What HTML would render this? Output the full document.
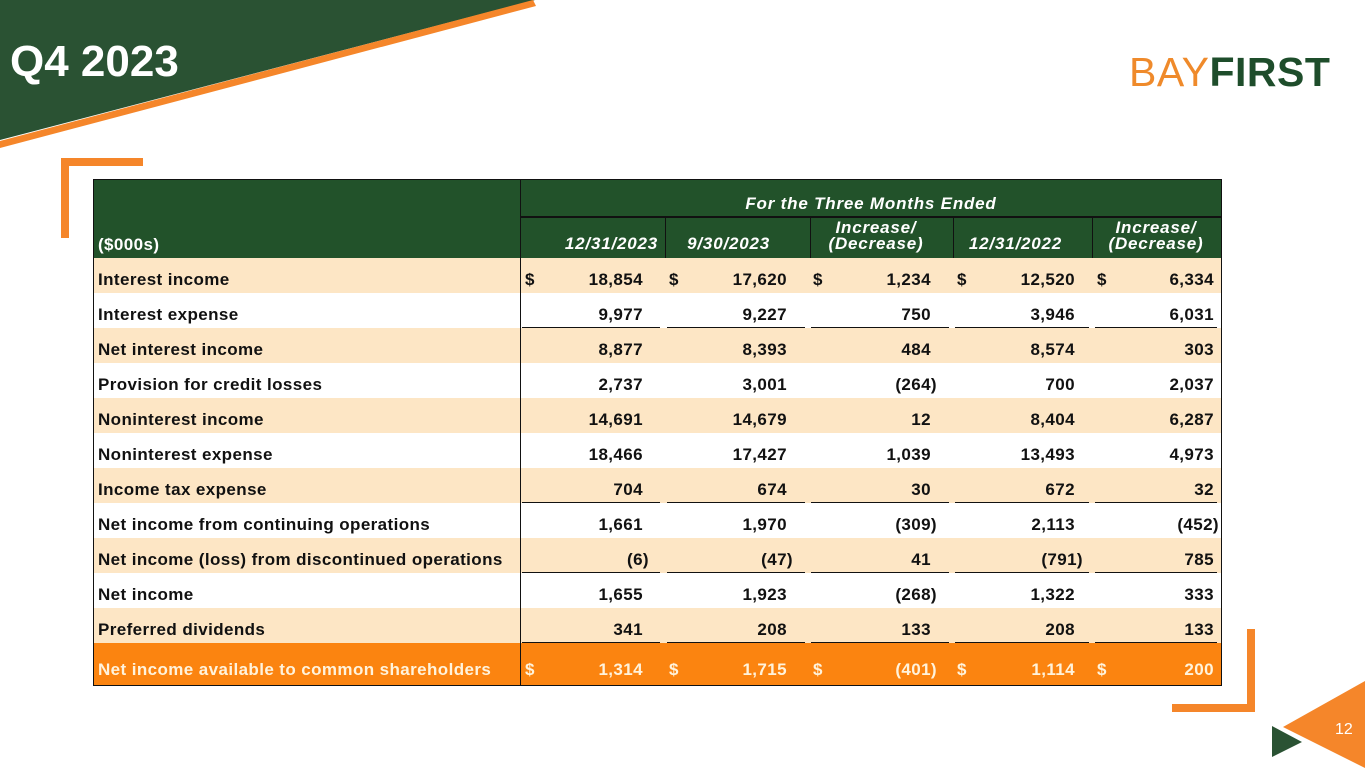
<!DOCTYPE html>
<html><head><meta charset="utf-8"><style>
*{margin:0;padding:0;box-sizing:border-box}
body{width:1365px;height:768px;position:relative;overflow:hidden;background:#fff;font-family:"Liberation Sans",sans-serif}
.abs{position:absolute}
.t{position:absolute;left:93px;top:179px;width:1129px;height:507px;border:1px solid #111}
.row{position:absolute;left:0;width:1127px;height:35px;font-weight:bold;font-size:17px;letter-spacing:0.4px;color:#111}
.row .l{position:absolute;left:4px;white-space:nowrap}
.c{position:absolute;white-space:nowrap}
.d{position:absolute}
.ul{position:absolute;bottom:0;height:1.5px;background:#111}
.h{color:#fff;font-style:italic;font-weight:bold;font-size:17px;letter-spacing:0.8px;position:absolute;text-align:center;line-height:16px;white-space:nowrap}
</style></head><body>
<svg class="abs" style="left:0;top:0" width="540" height="150">
<polygon points="0,0 535,0 0,140" fill="#2a5233"/>
<polygon points="0,141 533,0 536,6 0,148" fill="#f5862a"/>
</svg>
<div class="abs" style="left:10px;top:37px;color:#fff;font-weight:bold;font-size:44px">Q4 2023</div>
<div class="abs" style="left:1129px;top:49px;font-size:41px;letter-spacing:0.5px;white-space:nowrap"><span style="color:#ef8a2b">BAY</span><span style="color:#1e4d2b;font-weight:bold">FIRST</span></div>
<div class="abs" style="left:61px;top:158px;width:8px;height:80px;background:#f5862a"></div>
<div class="abs" style="left:61px;top:158px;width:82px;height:8px;background:#f5862a"></div>
<div class="abs" style="left:1247px;top:629px;width:8px;height:83px;background:#f5862a"></div>
<div class="abs" style="left:1172px;top:704px;width:83px;height:8px;background:#f5862a"></div>
<svg class="abs" style="left:1260px;top:678px" width="105" height="90">
<polygon points="23,49 105,3 105,90" fill="#f5862a"/>
<polygon points="12,48 12,79 42,64" fill="#2a5233"/>
<text x="75" y="56" fill="#fff" font-size="16" font-family="Liberation Sans">12</text>
</svg>
<div class="t">
<div class="abs" style="left:0;top:0;width:1127px;height:78px;background:#22522a"></div>
<div class="abs" style="left:426px;top:0;width:1px;height:78px;background:#111"></div>
<div class="abs" style="left:427px;top:36px;width:700px;height:1.5px;background:#111"></div>
<div class="h" style="left:427px;top:16px;width:700px">For the Three Months Ended</div>
<div class="abs" style="left:4px;top:55px;color:#fff;font-weight:bold;font-size:17px;letter-spacing:0.4px">($000s)</div>
<div class="h" style="right:563px;top:56px">12/31/2023</div>
<div class="h" style="right:451px;top:56px">9/30/2023</div>
<div class="h" style="left:710px;top:40px;width:144px">Increase/<br>(Decrease)</div>
<div class="h" style="right:159px;top:56px">12/31/2022</div>
<div class="h" style="left:998px;top:40px;width:128px">Increase/<br>(Decrease)</div>
<div class="abs" style="left:571px;top:37px;width:1px;height:41px;background:#111"></div>
<div class="abs" style="left:716px;top:37px;width:1px;height:41px;background:#111"></div>
<div class="abs" style="left:859px;top:37px;width:1px;height:41px;background:#111"></div>
<div class="abs" style="left:998px;top:37px;width:1px;height:41px;background:#111"></div>
<div id="rows"></div>
</div>
<script>
const R=[["Interest income",1,["18,854","17,620","1,234","12,520","6,334"],1,0],
["Interest expense",0,["9,977","9,227","750","3,946","6,031"],0,1],
["Net interest income",1,["8,877","8,393","484","8,574","303"],0,0],
["Provision for credit losses",0,["2,737","3,001","(264)","700","2,037"],0,0],
["Noninterest income",1,["14,691","14,679","12","8,404","6,287"],0,0],
["Noninterest expense",0,["18,466","17,427","1,039","13,493","4,973"],0,0],
["Income tax expense",1,["704","674","30","672","32"],0,1],
["Net income from continuing operations",0,["1,661","1,970","(309)","2,113","(452)"],0,0],
["Net income (loss) from discontinued operations",1,["(6)","(47)","41","(791)","785"],0,1],
["Net income",0,["1,655","1,923","(268)","1,322","333"],0,0],
["Preferred dividends",1,["341","208","133","208","133"],0,1],
["Net income available to common shareholders",2,["1,314","1,715","(401)","1,114","200"],1,0]];
const cols=[[427,144],[571,144],[715,144],[859,140],[999,128]];
const RE=[643,787,931,1075,1214].map(x=>1221-x), RP=[649,793,937,1083,1219].map(x=>1221-x);
const DL=[525,669,813,957,1097].map(x=>x-94);
let h="";R.forEach((r,i)=>{const top=78+i*35;const H=i==11?42:35;const ty=i==11?17:12;
const bg=r[1]==2?"#fb8410":r[1]?"#fde6c5":"#fff";const col=r[1]==2?"#fff3dc":"#111";
h+=`<div class="row" style="top:${top}px;height:${H}px;background:${bg};color:${col}"><div class="l" style="top:${ty}px">${r[0]}</div>`;
h+=`<div class="abs" style="left:426px;top:0;width:1px;height:${H}px;background:#111"></div>`;
cols.forEach((c,j)=>{const v=r[2][j];const pr=v[0]=="("?RP[j]:RE[j];
h+=`<div class="c" style="right:${pr}px;top:${ty}px">${v}</div>`;
if(r[3])h+=`<div class="d" style="left:${DL[j]}px;top:${ty}px">$</div>`;
if(r[4])h+=`<div class="ul" style="left:${c[0]+(j?2:1)}px;width:${c[1]-6}px"></div>`;});
h+="</div>";});
document.getElementById("rows").innerHTML=h;
</script>
</body></html>
